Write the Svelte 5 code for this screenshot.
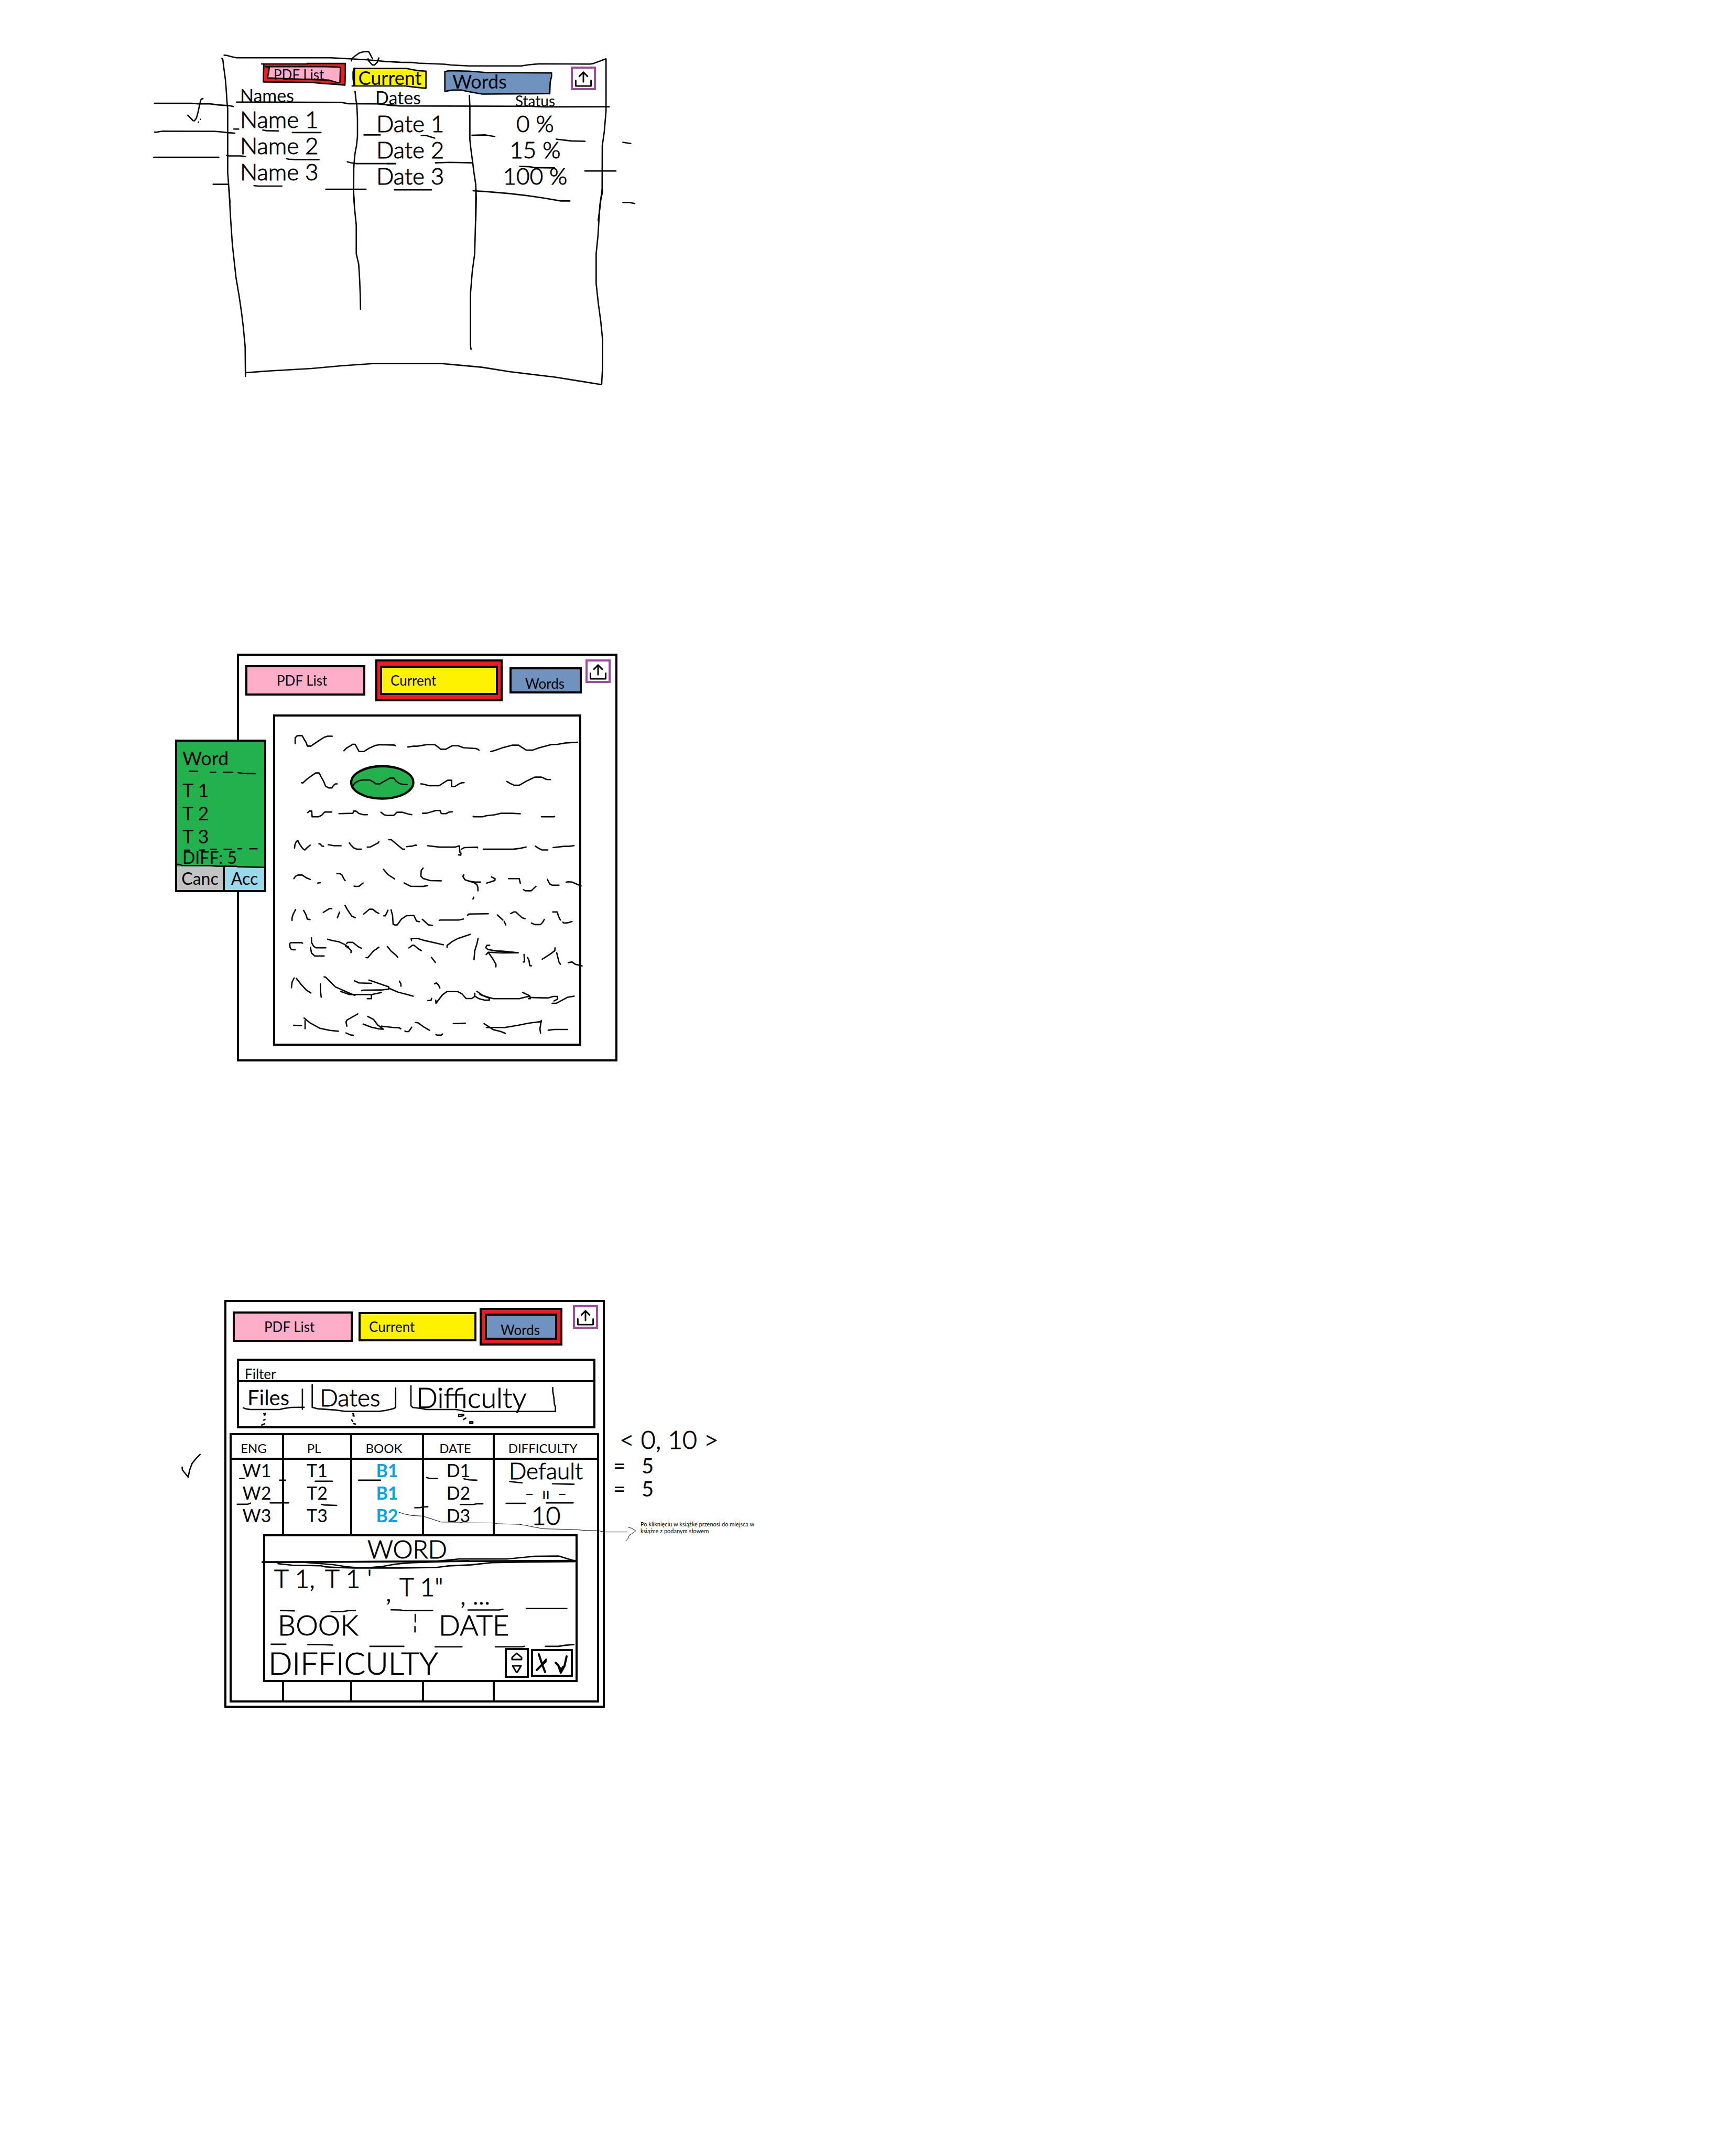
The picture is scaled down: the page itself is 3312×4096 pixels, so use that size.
<script>
  // Ink groups: origin on the canvas, drawing scale, and pen strokes as point lists.
  const listInk = [
    { x: 320, y: 90, sx: 2.8, sy: 3, lines: [
      '498,98 515,99 545,108 575,115 1160,115 1230,119 1300,123 1380,128 1450,134 1500,140 1568,142',
      '484,118 490,128 494,168 500,215 506,262 511,330 515,400 520,455 520,620 520,880 524,935 528,1000 534,1080',
      '1289,136 1292,122 1312,103 1340,82 1365,75 1396,73 1404,88 1421,122',
      '1393,122 1400,140 1420,163 1432,163 1450,145 1455,130 1460,116',
      '575,410 1225,412 1270,421 1450,422 1520,429 1568,431',
      '65,418 290,418 340,422 410,422 460,429 530,434 556,440',
      '65,610 80,610 115,604 435,605 485,609 520,614 564,617',
      '60,778 465,778',
      '272,498 290,518 305,534 313,535 325,518 335,480 345,430 352,398 358,389 366,387',
      '338,543 338,545', '350,525 351,526',
      '558,590 588,590', '738,596 762,601 836,602', '922,613 1100,613',
      '513,766 528,769 600,769 632,773', '886,787 900,791 940,793 1088,794',
      '430,958 522,958', '684,967 712,970 857,970', '1130,991 1380,991',
      '1264,808 1290,815 1320,820 1564,820', '1368,629 1468,629',
      '1312,338 1318,400 1323,425 1327,520 1327,640 1321,700 1312,750 1308,790 1304,850 1303,1035 1307,1080'
    ] },
    { x: 860, y: 90, sx: 2.751, sy: 3, lines: [
      '0,140 80,145 150,146 190,151 350,158 390,163 500,169 820,169 860,162 930,155 1240,157 1260,153 1334,123',
      '1337,123 1337,470 1326,610 1314,700 1313,1020 1305,1060 1300,1110 1289,1200',
      '0,431 80,436 870,438 960,442 1356,441',
      '502,366 505,440 505,660 512,730 522,810 530,880 541,960 544,1050 541,1200',
      '208,633 235,632 290,650', '518,631 600,629 657,640', '1033,657 1125,669 1208,671',
      '1440,678 1488,686', '1440,1079 1480,1079 1512,1086', '295,815 380,812 520,815',
      '810,838 870,841 905,847 1022,849', '1208,869 1397,869', '44,995 270,995', '0,820 52,820',
      '525,1001 600,1006 750,1020 860,1034 960,1050 1060,1069 1116,1069'
    ] },
    { x: 320, y: 420, sx: 1.479, sy: 3, lines: [
      '279,0 284,190 290,370 302,590 312,710 320,820 326,920 332,1050 333,1248',
      '688,5 691,120 697,240 697,430 705,500 708,600 710,700 711,800',
      '1090,0 1089,200 1086,430 1078,550 1072,700 1072,1040 1074,1068',
      '1505,0 1497,110 1491,310 1485,430 1485,630 1492,760 1500,880 1506,1000 1506,1190 1503,1300',
      '333,1223 400,1213 550,1195 650,1177 750,1163 980,1163 1030,1172 1110,1187 1200,1216 1350,1253 1440,1282 1500,1302'
    ] }
  ];

  const pageInk = [
    { x: 600, y: 1570, sx: 2.178, sy: 3, lines: [
      '121,245 121,208 128,196 137,192 155,193 165,218 174,238 180,262 197,262 240,222 262,203 278,196 300,196',
      '357,293 370,275 400,250 411,250 430,298 454,298 480,275 510,257 530,253 600,255 607,260',
      '666,268 690,263 715,262 755,253 797,253 812,268 825,283 850,283 880,260 910,260 935,273 995,278 1008,285 1010,290',
      '1067,298 1085,292 1120,275 1170,256 1202,256 1215,268 1238,288 1270,289 1300,274 1360,252 1390,250 1430,241 1487,236',
      '152,506 158,508 180,480 220,441 237,441 246,465 258,495 268,528 283,541 298,541 308,522 316,514 324,514',
      '402,526 408,510 430,492 455,487 482,488 498,500 511,514 530,514 550,498 580,475 598,475 608,494 625,511 645,518 662,518',
      '729,514 738,515 770,526 817,526 858,490 878,490 878,532 893,532 915,513 928,506 938,506',
      '1145,498 1160,510 1180,523 1205,523 1240,495 1280,469 1313,469 1337,484 1356,485',
      '182,705 190,695 201,695 203,733 235,733 250,722 264,701 298,701',
      '333,712 400,710 404,695 415,695 430,711 450,719 470,719',
      '536,703 552,720 567,724 598,724 613,703 640,703 672,716 685,719',
      '737,710 758,709 802,691 822,691 828,712 851,712 866,701 881,700',
      '982,729 985,733 1028,733 1045,726 1085,720 1115,710 1170,710 1210,713', '1312,733 1374,733 1376,730',
      '118,941 120,918 127,897 134,891 142,915 158,946 168,954 178,940 194,922',
      '236,913 243,915 250,928 258,929', '281,919 310,926 343,926', '383,907 390,920 404,940 420,949 441,949',
      '470,935 485,934 523,906 526,898', '574,886 586,886 640,948 650,949', '659,932 690,928 700,922 708,923',
      '762,926 820,935 895,935 915,927 918,970 923,975 922,989 911,987', '926,948 940,938 1003,936 1003,940',
      '1031,949 1175,949 1210,943 1238,935', '1283,929 1300,944 1315,954 1343,954', '1369,938 1420,930 1445,930 1470,925',
      '115,1145 122,1130 135,1121 155,1121 175,1140 194,1150', '230,1175 243,1172',
      '323,1112 338,1112 348,1122 356,1145 363,1158', '406,1195 415,1197 430,1196 450,1174',
      '548,1083 570,1118 602,1147', '740,1075 731,1090 729,1128 740,1144 775,1158 828,1160',
      '648,1174 680,1196 740,1197 762,1191', '937,1120 932,1130 942,1152 960,1161 990,1168 1018,1168',
      '960,1161 985,1171 1000,1185 1005,1204 1005,1226', '1070,1133 1088,1146 1087,1157 1048,1175',
      '1153,1145 1205,1145 1210,1176', '1225,1218 1235,1226 1263,1226 1286,1196',
      '1341,1150 1352,1180 1365,1189 1397,1189', '1432,1169 1442,1166 1460,1168 1504,1194', '985,1269 981,1281'
    ] },
    { x: 600, y: 1930, sx: 2.178, sy: 3, lines: [
      '123,272 112,300 106,325 106,344', '162,277 173,305 180,335 193,338', '257,290 287,265 298,265', '336,288 325,326',
      '362,243 375,275 395,315 412,326', '453,301 480,269 496,269 515,290 526,296', '550,313 557,313 570,276',
      '585,273 592,310 595,370 604,374 615,373 635,335 660,312 695,310 708,348 722,352',
      '736,336 765,373 785,377', '818,343 825,341 912,341 935,334', '955,310 960,301 1055,299',
      '1099,307 1126,341', '1132,350 1140,374', '1164,298 1178,287 1188,287 1218,325 1233,332',
      '1264,361 1280,371 1308,371 1318,356 1326,337', '1367,287 1388,287 1396,320 1404,341', '1416,355 1421,361 1440,359 1460,351',
      '157,495 150,491 98,492 95,500 96,522 103,538 121,539', '200,460 200,490 210,515 222,526 269,526',
      '195,523 200,560 215,580 261,580', '278,469 300,477 335,487 362,505 375,520 392,545 391,558',
      '370,498 375,490 400,490 428,520 442,529', '364,514 378,518 372,526', '464,591 472,592 500,547 526,522',
      '567,517 585,548 610,577 617,590', '684,478 682,464 715,464 740,475 800,494 838,506', '671,527 688,509 696,509 715,531 731,545',
      '780,589 799,623', '856,523 856,510 880,485 910,463 968,436', '1006,463 1000,500 990,545 986,605',
      '1062,509 1048,510 1043,525 1053,537 1095,547 1200,559 1120,560 1055,556 1045,571', '1055,556 1075,595 1092,635 1092,653',
      '1070,545 1130,549 1180,557', '1228,570 1231,620 1225,620', '1245,590 1252,610 1256,645 1264,646',
      '1316,602 1360,563 1377,545 1378,526', '1386,559 1397,620 1404,635', '1442,625 1460,620 1475,635 1509,647',
      '116,727 106,755 103,792', '127,730 150,770 175,808 197,827', '243,766 244,820 247,855',
      '261,720 268,721 315,786 375,823 410,843', '342,817 365,828 385,838 490,838 538,824', '408,746 430,760 490,763',
      '442,811 450,808 540,807 574,800 574,786 550,775 478,741', '574,795 620,822 665,838 692,848', '490,840 490,865 470,865',
      '625,748 632,765 633,782', '795,766 804,760 815,775 821,794', '763,877 778,877 781,863',
      '801,875 802,896 833,840 855,818 908,818 928,833 948,864 975,864 990,850 990,829',
      '992,850 1010,865 1040,875 1060,875 1060,862 1030,845 1000,816', '1015,838 1055,855 1080,865 1205,865 1240,853 1255,850 1260,857 1345,860 1370,850 1390,850 1390,868 1373,880',
      '1221,823 1255,845 1259,865 1250,865', '1364,896 1385,895 1440,855 1470,848',
      '114,1042 152,1045', '169,1012 169,1065', '164,994 195,1028 240,1062 290,1076 330,1082',
      '424,967 372,1007 367,1020 371,1048', '367,1093 390,1107 402,1109', '472,983 500,1003 520,1040 547,1068 525,1066 490,1055 450,1034',
      '538,1048 590,1056 625,1059 632,1066', '652,1080 656,1084 670,1084 685,1055', '703,1024 715,1025 745,1055 771,1076',
      '802,1104 808,1108 828,1108 834,1100', '886,1031 944,1028', '1035,1031 1080,1072 1115,1083 1138,1096',
      '1046,1057 1135,1057 1200,1042 1250,1028 1308,1018 1312,1010 1305,1065 1308,1094', '1345,1075 1375,1070 1439,1070'
    ] },
    { x: 370, y: 1430, sx: 3, sy: 2.703, lines: [
      '152,766 206,766', '291,772 327,772', '379,772 441,772', '477,774 500,777 520,779 591,780',
      '122,1240 153,1240', '219,1240 252,1238', '293,1234 331,1234', '384,1234 432,1234', '475,1231 498,1231', '554,1231 603,1231',
      '72,1324 92,1326 100,1331 290,1332 330,1335 465,1336 475,1339 650,1342'
    ] }
  ];

  const wordsInk = [
    { x: 380, y: 2860, sx: 2.613, sy: 3, lines: [
      '419,800 435,807 460,811 630,811 660,803 700,797 772,796', '762,676 762,809',
      '819,645 819,797 850,806 960,815 1010,823 1210,823 1245,817 1290,806 1303,797 1303,669',
      '538,838 546,846', '548,836 540,848', '537,882 545,878', '526,915 543,906',
      '1055,838 1062,855', '1060,840 1056,854', '1048,880 1054,890', '1058,905 1070,908'
    ] },
    { x: 900, y: 2860, sx: 3, sy: 3, lines: [
      '38,654 38,785 50,798 100,803 140,811 335,811 380,818 395,824 1001,824 1001,795 994,775 990,730 983,690 983,665',
      '355,858 356,845 388,844 390,852 362,857', '388,878 404,868', '430,893 450,892 450,904 430,903 430,893'
    ] },
    { x: 380, y: 3150, sx: 2.529, sy: 3, lines: [
      '62,325 64,345 80,368 96,392 104,345 118,300 140,268 163,240',
      '385,401 410,401', '610,412 643,412', '810,419 905,419', '1053,412 1176,412', '1435,394 1455,401 1495,401',
      '372,572 430,572 446,565', '557,563 661,563', '845,573 860,577 930,580', '1369,596 1400,595 1415,590 1442,589'
    ] },
    { x: 980, y: 3130, sx: 2.178, sy: 3, lines: [
      '110,463 135,470 172,472', '331,481 391,490', '538,496 642,499', '314,626 407,626', '508,623 638,623',
      '92,634 155,634 175,629 201,629'
    ] },
    { x: 480, y: 3380, sx: 1.782, sy: 3, lines: [
      '183,269 870,262 960,247 1150,247 1260,229 1355,227 1420,260', '245,278 300,288 415,292 430,299 490,305 550,307 720,307 870,304 920,293 1010,286 1090,271 1240,267 1420,264',
      '350,270 460,284 510,297 550,304', '610,304 660,296 710,281 770,272 900,264 1000,258',
      '255,590 310,593', '455,598 500,597 525,591 551,590', '692,586 730,587 740,590 857,590', '997,587 1120,587 1135,582', '1228,577 1388,577',
      '218,815 276,815', '363,817 430,818 461,821', '609,829 743,829', '867,832 973,832', '1105,832 1210,832 1220,829', '1303,829 1355,829 1380,822 1416,817',
      '788,617 788,666', '787,698 787,733'
    ] }
  ];

  const files = [
    { name: 'Name 1', date: 'Date 1', status: '0 %' },
    { name: 'Name 2', date: 'Date 2', status: '15 %' },
    { name: 'Name 3', date: 'Date 3', status: '100 %' }
  ];

  const words = [
    { eng: 'W1', pl: 'T1', book: 'B1', date: 'D1', difficulty: 'Default', size: 'set' },
    { eng: 'W2', pl: 'T2', book: 'B1', date: 'D2', difficulty: '–  ıı  –', size: 'same' },
    { eng: 'W3', pl: 'T3', book: 'B2', date: 'D3', difficulty: '10', size: 'top' }
  ];
</script>

{#snippet ink(groups)}
  {#each groups as g}
    <g transform="translate({g.x} {g.y}) scale({1 / g.sx} {1 / g.sy})">
      {#each g.lines as points}
        <polyline class="pen" {points} />
      {/each}
    </g>
  {/each}
{/snippet}

{#snippet upload()}
  <button class="upload" aria-label="Upload">
    <svg viewBox="0 0 40 38" aria-hidden="true">
      <path d="M5 23v11h30V23" stroke-width="3" />
      <path d="M20 26V7M12 15l8-8 8 8" stroke-width="3" />
    </svg>
  </button>
{/snippet}

<main>
  <section class="sheet list-sheet">
    <svg class="ink" aria-hidden="true">
      <g transform="scale(.859)">
        <polygon class="pen" fill="#ed1c24" points="586,142 682,142 682,141 767,141 767,162 766,189 744,187 723,186 691,183 585,182 585,168" />
        <polyline class="pen" points="581,142 586,142" />
        <polygon class="pen" fill="#ffaec9" points="590,148 723,148 750,149 756,150 755,183 748,183 731,178 641,175 594,173 596,164 598,150" />
        <polygon class="pen" fill="#fff200" points="787,152 902,152 929,157 946,158 946,196 925,194 900,191 782,191 787,190" />
        <polyline class="pen bold" points="787,152 785,160 785,175 787,189" />
        <polygon class="pen" fill="#7092be" points="988,159 998,157 1042,158 1078,161 1225,162 1225,170 1222,182 1221,208 1071,209 1038,203 1025,200 1005,200 988,203" />
        {@render ink(listInk)}
      </g>
    </svg>
    <nav class="sketch-tabs">
      <button class="hand t1">PDF List</button>
      <button class="hand t2">Current</button>
      <button class="hand t3">Words</button>
      {@render upload()}
    </nav>
    <table class="files">
      <thead>
        <tr><th>Names</th><th>Dates</th><th>Status</th></tr>
      </thead>
      <tbody>
        {#each files as f}
          <tr><td>{f.name}</td><td>{f.date}</td><td>{f.status}</td></tr>
        {/each}
      </tbody>
    </table>
  </section>

  <section class="sheet page-sheet">
    <div class="board">
      <nav class="tabs">
        <button class="tab pink">PDF List</button>
        <span class="active"><button class="tab yellow">Current</button></span>
        <button class="tab blue">Words</button>
        {@render upload()}
      </nav>
      <article class="reader" aria-label="Page"></article>
    </div>
    <form class="translate hand">
      <div class="meanings">
        <strong>Word</strong>
        <span>T 1</span>
        <span>T 2</span>
        <span>T 3</span>
        <em>DIFF: 5</em>
      </div>
      <div class="actions">
        <button type="button" class="cancel">Canc</button>
        <button type="button" class="accept">Acc</button>
      </div>
    </form>
    <svg class="ink" aria-hidden="true">
      <g transform="scale(.859) translate(0 -1452)">
        <ellipse class="frame" cx="849" cy="1738" rx="69" ry="36" fill="#22b14c" />
        {@render ink(pageInk)}
      </g>
    </svg>
  </section>

  <section class="sheet words-sheet">
    <div class="board">
      <nav class="tabs">
        <button class="tab pink">PDF List</button>
        <button class="tab yellow">Current</button>
        <span class="active tight"><button class="tab blue">Words</button></span>
        {@render upload()}
      </nav>
      <div class="filter">
        <h2>Filter</h2>
        <div class="filters hand">
          <button class="f1">Files</button>
          <button class="f2">Dates</button>
          <button class="f3">Difficulty</button>
        </div>
      </div>
      <div class="words-area">
        <table class="words">
          <colgroup><col class="c1" /><col class="c2" /><col class="c3" /><col class="c4" /><col /></colgroup>
          <thead>
            <tr><th>ENG</th><th>PL</th><th>BOOK</th><th>DATE</th><th>DIFFICULTY</th></tr>
          </thead>
          <tbody class="hand">
            {#each words as w}
              <tr>
                <td>{w.eng}</td><td>{w.pl}</td><td><a href="#book">{w.book}</a></td><td>{w.date}</td><td class={w.size}>{w.difficulty}</td>
              </tr>
            {/each}
            <tr class="rest"><td></td><td></td><td></td><td></td><td></td></tr>
          </tbody>
        </table>
        <div class="dialog light" role="dialog" aria-label="Word">
          <h3>WORD</h3>
          <p class="forms"><span class="w1">T 1,</span><span class="w2">T 1 '</span><span class="w3">,</span><span class="w4">T 1"</span><span class="w5">, ...</span></p>
          <p class="meta"><span>BOOK</span><span>DATE</span></p>
          <div class="level-row">
            <span>DIFFICULTY</span>
            <div class="stepper">
              <button aria-label="Raise"><svg viewBox="0 0 24 16"><path d="M12 2 21 10v4H3v-4z" /></svg></button>
              <button aria-label="Lower"><svg viewBox="0 0 24 16"><path d="M4 2h16l-7 12h-2z" /></svg></button>
            </div>
            <div class="confirm">
              <button aria-label="Close"><svg viewBox="0 0 30 45"><path d="M8 6l6 18 6 16M22 16l-10 12-8 8M21 20 12 28" /></svg></button>
              <button aria-label="Save"><svg viewBox="0 0 30 45"><path d="M4 22l5 5 5 14 7-13 4-18M9 27l5 9 6-7M12 32l2 7 4-9" /></svg></button>
            </div>
          </div>
        </div>
      </div>
    </div>
    <aside>
      <p class="light range">&lt; 0, 10 &gt;</p>
      <p class="hand eq">= &nbsp; 5</p>
      <p class="hand eq">= &nbsp; 5</p>
      <p class="note">Po kliknięciu w książke przenosi do miejsca w książce z podanym słowem</p>
    </aside>
    <svg class="ink" aria-hidden="true">
      <g transform="scale(.859) translate(0 -2887)">
        {@render ink(wordsInk)}
        <polyline class="thick" points="583,3469 700,3469 1060,3467 1279,3466" />
        <g transform="translate(980 3130) scale({1 / 2.178} {1 / 3})">
          <polyline class="hair" points="-207,684 -180,697 -140,708 -90,711 0,751 90,752 105,756 255,757 270,762 375,766 410,773 440,782 495,796 635,800 700,807 755,808 795,817 900,817" />
          <polyline class="hair" points="905,787 922,792 941,810 925,826 910,838 904,860 892,878" />
        </g>
      </g>
    </svg>
  </section>
</main>

<style>
  :global(body) { background: #fff; }
  main {
    display: flex;
    flex-direction: column;
    gap: 455px;
    padding-bottom: 838px;
    color: #000;
    font-family: Lato, "Open Sans", sans-serif;
    font-size: 26px;
  }
  button { margin: 0; padding: 0; border: 0; background: none; color: inherit; font: inherit; cursor: pointer; }
  h2, h3, p { margin: 0; font-weight: 400; }
  .hand { font-weight: 400; }
  .light { font-weight: 300; }
  .light, .files td, .f2, .f3, .set, .top { -webkit-text-stroke: 1px #000; }
  .sheet { position: relative; }
  .ink { position: absolute; top: 0; left: 0; width: 1504px; height: 100%; overflow: visible; pointer-events: none; }
  .pen { stroke: #000; stroke-width: 2.6px; stroke-linecap: round; stroke-linejoin: round; vector-effect: non-scaling-stroke; }
  polyline { fill: none; }
  .bold { stroke-width: 4px; }
  .frame { stroke: #000; stroke-width: 5px; }
  .thick { stroke: #000; stroke-width: 4px; stroke-linecap: round; }
  .hair { stroke: #000; stroke-width: 1px; vector-effect: non-scaling-stroke; }

  .upload { box-sizing: border-box; flex: none; align-self: flex-start; width: 48px; height: 45px; border: 4px solid #a349a4; background: #fff; }
  .upload svg { display: block; width: 100%; height: 100%; fill: none; stroke: #000; stroke-linecap: round; stroke-linejoin: round; }

  .list-sheet { box-sizing: border-box; min-height: 792px; padding-top: 121px; }
  .sketch-tabs { position: relative; display: flex; height: 46px; padding-left: 502px; }
  .sketch-tabs button { box-sizing: border-box; }
  .sketch-tabs .upload { margin: 6px 0 0 36px; }
  .t1 { width: 157px; height: 41px; padding-left: 20px; font-size: 26px; line-height: 40px; text-align: left; }
  .t2 { width: 142px; height: 39px; margin: 8px 0 0 14px; font-size: 36px; line-height: 39px; }
  .t3 { width: 206px; height: 42px; margin: 13px 0 0 32px; padding-left: 16px; font-size: 36px; line-height: 42px; text-align: left; }
  .files { position: relative; margin-left: 458px; border-collapse: collapse; table-layout: fixed; width: 688px; }
  .files th, .files td { padding: 0; text-align: left; vertical-align: top; }
  .files th { width: 244px; font-size: 34px; font-weight: 400; line-height: 30px; }
  .files th:nth-child(2) { width: 220px; padding: 4px 0 0 14px; }
  .files th:nth-child(3) { width: 170px; padding: 10px 40px 0 0; font-size: 28px; text-align: center; }
  .files td { height: 50px; font-size: 44px; font-weight: 300; line-height: 40px; }
  .files td + td { height: 42px; padding: 8px 0 0 16px; }
  .files td:nth-child(3) { padding: 8px 40px 0 0; text-align: center; }

  .board { box-sizing: border-box; flex: none; width: 726px; border: 4px solid #000; }
  .tabs { display: flex; align-items: center; gap: 7px; height: 79px; padding: 7px 9px 0 12px; }
  .tabs .upload { margin-left: auto; }
  .tab { box-sizing: border-box; flex: none; border: 4px solid #000; text-align: left; line-height: 30px; }
  .pink { width: 229px; height: 58px; padding-left: 56px; background: #ffaec9; }
  .yellow { width: 225px; height: 56px; padding-left: 16px; background: #fff200; }
  .blue { width: 138px; height: 50px; padding: 12px 0 0 26px; background: #7092be; }
  .active { display: flex; flex: none; padding: 8px 5px; border: 4px solid #000; background: #ed1c24; }
  .tight { padding: 7px 6px; }

  .page-sheet { padding-left: 452px; }
  .page-sheet .active { margin: 0 6px 0 12px; }
  .reader { box-sizing: border-box; min-height: 632px; margin: 26px 65px; width: 588px; border: 4px solid #000; }
  .translate { position: absolute; top: 164px; left: 334px; box-sizing: border-box; width: 174px; border: 4px solid #000; background: #22b14c; }
  .meanings { display: flex; flex-direction: column; box-sizing: border-box; height: 238px; padding: 14px 0 0 10px; font-size: 36px; line-height: 44px; }
  .meanings strong { font-weight: 400; line-height: 34px; padding-bottom: 22px; }
  .meanings em { font-style: normal; font-size: 32px; line-height: 38px; }
  .actions { display: flex; height: 45px; font-size: 32px; line-height: 40px; }
  .cancel { width: 87px; background: #c3c3c3; }
  .accept { flex: 1; border-left: 4px solid #000; background: #99d9ea; }

  .words-sheet { display: flex; padding-left: 428px; }
  .words-sheet .tabs { gap: 6px; height: 82px; padding-top: 6px; }
  .pink + .yellow { margin-left: 5px; }
  .filter { height: 125px; margin: 20px 14px 0 20px; border: 4px solid #000; }
  .filter h2 { height: 37px; padding-left: 11px; border-bottom: 4px solid #000; font-size: 26px; line-height: 50px; }
  .filters { display: flex; font-size: 40px; line-height: 58px; }
  .filters button { text-align: left; }
  .f1 { width: 138px; padding-left: 16px; }
  .f2 { width: 184px; padding-left: 16px; font-size: 46px; font-weight: 300; }
  .f3 { padding-left: 16px; font-size: 54px; font-weight: 300; }
  .words-area { position: relative; margin: 9px 7px 6px 6px; }
  .words { width: 100%; height: 514px; border-collapse: collapse; table-layout: fixed; border: 4px solid #000; }
  .words th, .words td { padding: 0; border-right: 4px solid #000; text-align: center; }
  .words th { height: 43px; padding-right: 12px; border-bottom: 4px solid #000; font-size: 24px; font-weight: 400; line-height: 36px; vertical-align: bottom; }
  .words td { height: 43px; font-size: 34px; line-height: 40px; vertical-align: top; }
  .words .set { font-size: 44px; font-weight: 300; }
  .words .same { font-size: 30px; white-space: pre; }
  .words .top { font-size: 48px; font-weight: 300; }
  .words .rest td { height: auto; }
  .c1 { width: 100px; }
  .c2 { width: 130px; }
  .c3 { width: 137px; }
  .c4 { width: 135px; }
  .words a { color: #00a2e8; font-weight: 700; text-decoration: none; }

  .dialog { position: absolute; top: 193px; left: 64px; right: 41px; box-sizing: border-box; height: 282px; border: 4px solid #000; background: #fff; font-size: 48px; }
  .dialog h3 { height: 48px; padding-right: 50px; font-size: 48px; font-weight: 300; line-height: 48px; text-align: center; }
  .dialog p { font-weight: 300; }
  .forms { display: flex; height: 94px; padding: 10px 0 0 17px; box-sizing: border-box; line-height: 44px; }
  .w1 { width: 97px; }
  .w2 { width: 116px; }
  .w3 { width: 26px; padding-top: 26px; }
  .w4 { width: 116px; padding-top: 16px; }
  .w5 { padding-top: 32px; }
  .meta { display: flex; height: 64px; padding-left: 24px; font-size: 54px; line-height: 54px; }
  .meta span { width: 307px; }
  .meta span + span { width: auto; }
  .level-row { display: flex; align-items: center; gap: 4px; height: 70px; padding: 0 5px 0 6px; font-size: 60px; line-height: 60px; }
  .stepper { display: flex; flex-direction: column; box-sizing: border-box; width: 46px; height: 57px; margin-left: auto; border: 4px solid #000; justify-content: space-around; }
  .stepper button { display: flex; justify-content: center; }
  .stepper svg { width: 24px; height: 16px; }
  .confirm { display: flex; box-sizing: border-box; width: 80px; height: 53px; border: 4px solid #000; justify-content: space-around; }
  .confirm svg { display: block; width: 30px; height: 45px; }
  .level-row svg { fill: none; stroke: #000; stroke-width: 3; stroke-linecap: round; stroke-linejoin: round; }
  .level-row .confirm svg { stroke-width: 4; }

  aside { width: 300px; padding: 238px 0 0 16px; }
  .range { padding-left: 12px; font-size: 48px; line-height: 56px; white-space: nowrap; }
  .range.light { font-weight: 300; }
  .eq { font-size: 40px; line-height: 44px; }
  .note { margin-top: 39px; padding-left: 52px; font-size: 11px; line-height: 13px; width: 222px; }
</style>
